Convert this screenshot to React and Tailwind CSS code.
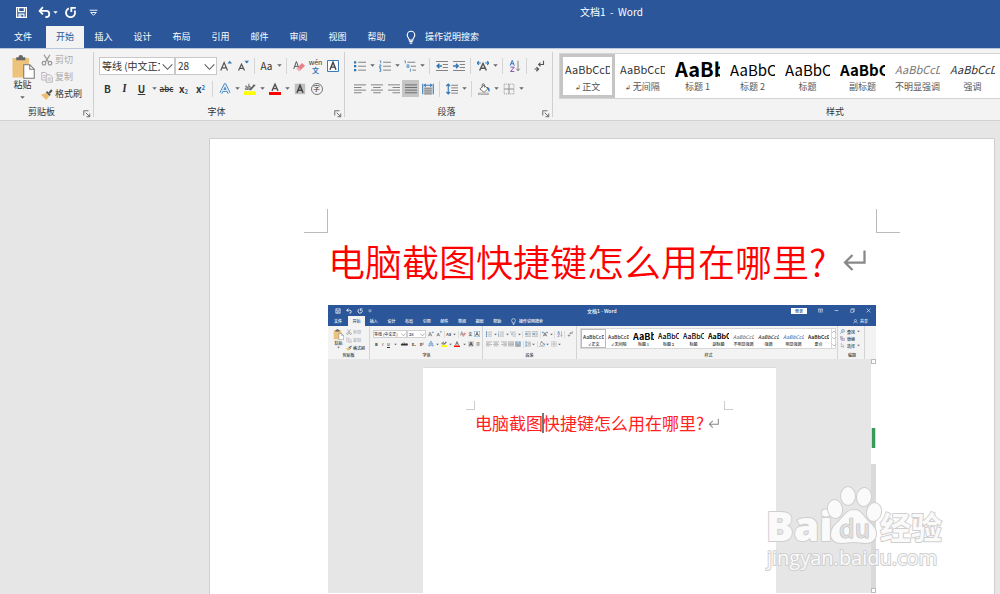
const tabs = ['插入', '设计', '布局', '引用', '邮件', '审阅', '视图', '帮助']

const styles = [
  { name: '正文', sample: 'AaBbCcDd', look: 'text-[11px]', mark: true },
  { name: '无间隔', sample: 'AaBbCcDd', look: 'text-[11px]', mark: true },
  { name: '标题 1', sample: 'AaBb', look: 'text-[20px] font-bold text-black' },
  { name: '标题 2', sample: 'AaBbC', look: 'text-[15px] text-black' },
  { name: '标题', sample: 'AaBbC', look: 'text-[15px] text-black' },
  { name: '副标题', sample: 'AaBbC', look: 'text-[15px] font-bold text-black' },
  { name: '不明显强调', sample: 'AaBbCcDd', look: 'text-[11px] italic text-[#777]' },
  { name: '强调', sample: 'AaBbCcDd', look: 'text-[11px] italic' },
]

const miniStyles = [
  { name: '↲ 正文', sample: 'AaBbCcD', look: 'text-[5px]' },
  { name: '↲ 无间隔', sample: 'AaBbCcD', look: 'text-[5px]' },
  { name: '标题 1', sample: 'AaBb', look: 'text-[9px] font-bold text-black' },
  { name: '标题 2', sample: 'AaBbC', look: 'text-[7px] text-black' },
  { name: '标题', sample: 'AaBbC', look: 'text-[7px] text-black' },
  { name: '副标题', sample: 'AaBbC', look: 'text-[7px] font-bold text-black' },
  { name: '不明显强调', sample: 'AaBbCcD', look: 'text-[5px] italic text-[#777]' },
  { name: '强调', sample: 'AaBbCcD', look: 'text-[5px] italic' },
  { name: '明显强调', sample: 'AaBbCcD', look: 'text-[5px] italic text-[#4a7ebb]' },
  { name: '要点', sample: 'AaBbCcD', look: 'text-[5px] font-bold' },
]

const gray = '#777'
const blue = '#2f75b5'

// All glyphs are drawn on a 16x16 grid
const icons = {
  save: (
    <g fill="none" stroke="#fff" strokeWidth="1.5">
      <path d="M2 2h12v12H2z" />
      <path d="M4.500 2v5h7V2M5 14v-4h6v4" />
      <path d="M7 11.500v2" />
    </g>
  ),
  undo: (
    <g fill="none" stroke="#fff" strokeWidth="2.200">
      <path d="M2 6h8a3.800 3.800 0 0 1 0 7.800H9" />
      <path d="M6 1.500L2 6l4 4.200" />
    </g>
  ),
  redo: (
    <g fill="none" stroke="#fff" strokeWidth="2.200">
      <path d="M6 3a5.600 5.600 0 1 0 7 2.500" />
      <path d="M9 7.500V2.300h5.500" />
    </g>
  ),
  customize: (
    <g fill="none" stroke="#fff" strokeWidth="1.600">
      <path d="M1 4h14M3 8h10l-5 5z" />
    </g>
  ),
  bulb: (
    <g fill="none" stroke="#fff" strokeWidth="1.300">
      <path d="M6 11.500c0-2-2.300-3-2.300-5.800a4.300 4.300 0 0 1 8.600 0c0 2.800-2.300 3.800-2.300 5.800zM6 13.200h4M6.500 15h3" />
    </g>
  ),
  scissors: (
    <g fill="none" stroke="#999" strokeWidth="1.700">
      <path d="M4 1l6 9.500M12 1L6 10.500" />
      <circle cx="4" cy="12.300" r="2.400" />
      <circle cx="12" cy="12.300" r="2.400" />
    </g>
  ),
  copy: (
    <g fill="#f3f3f3" stroke="#b5adb8" strokeWidth="1.200">
      <path d="M1 2h5l3 3v7H1z" />
      <path d="M7 5h5l3 3v7H7z" />
      <path d="M3 6h3M3 8.500h3M9 9.500h4M9 12h4" />
    </g>
  ),
  brush: (
    <g>
      <path d="M0 9l7-2.500 4 4.500-4 5z" fill="#edbd70" />
      <path d="M6.500 5.500l1.500-1.500 5 5-1.800 1.600z" fill="#555" />
      <path d="M10 5.500L13.500 1.500 15.500 3.500 12 7.500z" fill="#555" />
    </g>
  ),
  growFont: (
    <g>
      <path d="M1 14L5.500 3.500 10 14M2.700 10.500h5.600" fill="none" stroke="#555" strokeWidth="1.600" />
      <path d="M10 4.500L13 1l3 3.500z" fill={blue} />
    </g>
  ),
  shrinkFont: (
    <g>
      <path d="M2 14L6 5.500 10 14M3.700 11.200h4.600" fill="none" stroke="#555" strokeWidth="1.600" />
      <path d="M10 1h6L13 4.500z" fill={blue} />
    </g>
  ),
  eraser: (
    <g>
      <path d="M1 12L4.500 2 8 11M2.500 8.500h4" fill="none" stroke="#555" strokeWidth="1.300" />
      <path d="M4.500 11.500L12 4l4 3.500-7.500 7.500z" fill="#e5808c" />
      <path d="M4.500 11.500l2-2 4 3.500-2 2z" fill="#f2b3ba" />
    </g>
  ),
  boxedA: (
    <g fill="none">
      <path d="M.7.700h14.600v14.600H.7z" fill="#fff" stroke={blue} strokeWidth="1.300" />
      <path d="M4 13L8 3l4 10M5.500 9.500h5" stroke="#444" strokeWidth="1.900" />
    </g>
  ),
  outlineA: (
    <g fill="none" strokeLinejoin="round">
      <path d="M2.500 13.500L8 2.500l5.500 11M5 10h6" stroke={blue} strokeWidth="4" />
      <path d="M2.500 13.500L8 2.500l5.500 11M5 10h6" stroke="#dcebf7" strokeWidth="2" />
    </g>
  ),
  highlight: (
    <g>
      <path d="M0 11h16v5H0z" fill="#ff0" />
      <path d="M7 9l6-7.500L15.500 3 9 10z" fill="#666" />
      <path d="M1.500 4.500c3-1 3 0 3 4.500M4.500 6.500c-4-.5-4 3.300 0 1.800M6.500 1v8M6.500 5c3-1.500 4 3.500 0 3.500" fill="none" stroke="#444" strokeWidth="1.100" />
    </g>
  ),
  colorA: (
    <g>
      <path d="M0 12h16v4H0z" fill="#f00" />
      <path d="M4 10.500L8 1.500l4 9M5.500 7.500h5" fill="none" stroke="#555" strokeWidth="1.900" />
    </g>
  ),
  shadedA: (
    <g>
      <path d="M1 1h14v14H1z" fill="#bfbfbf" />
      <path d="M4 13L8 3l4 10M5.500 9.500h5" fill="none" stroke="#444" strokeWidth="2" />
    </g>
  ),
  bullets: (
    <g>
      <path d="M0 1.500h3v3H0zM0 6.800h3v3H0zM0 12h3v3H0z" fill={blue} />
      <path d="M5.500 3H16M5.500 8.300H16M5.500 13.500H16" stroke={gray} strokeWidth="1.200" />
    </g>
  ),
  numbers: (
    <g>
      <path d="M1 1.200h1.300v3.300M.5 6.500h2v1.700h-2v1.600h2.300M.5 11.500h2v3.700h-2M1 13.300h1.500" fill="none" stroke={blue} />
      <path d="M5.500 3H16M5.500 8.300H16M5.500 13.500H16" stroke={gray} strokeWidth="1.200" />
    </g>
  ),
  multilevel: (
    <g fill="none">
      <path d="M.5 1.200h1.300v3.300M4 6.500h2.500v3.300H4zM8.500 11.500v4" stroke={blue} />
      <path d="M4.500 3H15M9 8.300h7M11 13.500h5" stroke={gray} strokeWidth="1.200" />
    </g>
  ),
  outdent: (
    <g fill="none">
      <path d="M0 2h16M9 6h7M9 10h7M0 14h16" stroke={gray} strokeWidth="1.200" />
      <path d="M8 8H1.500M4.500 5L1.500 8l3 3" stroke={blue} strokeWidth="1.900" />
    </g>
  ),
  indent: (
    <g fill="none">
      <path d="M0 2h16M9 6h7M9 10h7M0 14h16" stroke={gray} strokeWidth="1.200" />
      <path d="M0 8h6.500M4 5l3 3-3 3" stroke={blue} strokeWidth="1.900" />
    </g>
  ),
  asian: (
    <g fill="none">
      <path d="M3.500 14L8 4.500l4.500 9.500M5.500 11h5" stroke="#555" strokeWidth="1.900" />
      <path d="M0 4h5M2.500 1.500L0 4l2.500 2.500M16 4h-5M13.500 1.500L16 4l-2.500 2.500" stroke={blue} strokeWidth="1.500" />
    </g>
  ),
  sort: (
    <g fill="none">
      <path d="M1.500 7.500l2.800-7 2.800 7M2.500 5h3.600" stroke={blue} strokeWidth="1.300" />
      <path d="M2 9.500h5L2 15.300h5" stroke="#8a4fb0" strokeWidth="1.300" />
      <path d="M12 1v13M9.500 11.500L12 14.500l2.500-3" stroke={gray} strokeWidth="1.200" />
    </g>
  ),
  marks: (
    <g fill="none" stroke="#555" strokeWidth="1.500">
      <path d="M14 1v5H8M10 3.500L7.500 6 10 8.500" />
      <path d="M2 12h5M4.500 9.500L7.500 12l-3 3" />
    </g>
  ),
  alignLeft: <path d="M0 2.500h16M0 6h10M0 9.500h16M0 13h10" stroke={gray} strokeWidth="1.200" />,
  alignCenter: <path d="M0 2.500h16M3 6h10M0 9.500h16M3 13h10" stroke={gray} strokeWidth="1.200" />,
  alignRight: <path d="M0 2.500h16M6 6h10M0 9.500h16M6 13h10" stroke={gray} strokeWidth="1.200" />,
  justify: <path d="M0 2.500h16M0 6h16M0 9.500h16M0 13h16" stroke="#666" strokeWidth="1.200" />,
  distribute: (
    <g fill="none">
      <path d="M2.500 5.500h11v10h-11z" fill="#d0d0d0" />
      <path d="M1 1v14M15 1v14M3 3h10M5 1L3 3l2 2M11 1l2 2-2 2" stroke={blue} strokeWidth="1.400" />
      <path d="M3 7h10M3 9.500h10M3 12h10M3 14.500h10" stroke={gray} strokeWidth="1.200" />
    </g>
  ),
  spacing: (
    <g fill="none">
      <path d="M3 1.500v13M.5 4L3 1.500 5.500 4M.5 12L3 14.500 5.500 12" stroke={blue} strokeWidth="1.500" />
      <path d="M7 3h9M7 6.500h9M7 10h9M7 13.500h9" stroke={gray} strokeWidth="1.200" />
    </g>
  ),
  bucket: (
    <g>
      <path d="M2.500 8L8 2.500l5 5.500-5 4.500zM5.500 6V2.500a1.500 1.500 0 0 1 3 0V6" fill="#fff" stroke="#666" strokeWidth="1.200" />
      <path d="M12 5c4 1 4 5 3 7-1.500-1-1.500-4-3-5z" fill={blue} />
      <path d="M.7 13.500h13v2H.7z" fill="#fff" stroke="#888" />
    </g>
  ),
  borders: (
    <g fill="none" stroke="#888">
      <path d="M1.500 1.500h13v13h-13z" strokeDasharray="1.500 1" />
      <path d="M8 1.500v13M1.500 8h13" strokeWidth="1.200" />
    </g>
  ),
  launcher: (
    <g fill="none" stroke="#555" strokeWidth="1.700">
      <path d="M1.500 11V1.500H11M5.500 5.500L13 13M13.500 7v6.500H7" />
    </g>
  ),
  chevron: <path d="M1 5l7 7 7-7" fill="none" stroke="#555" strokeWidth="1.500" />,
  caret: <path d="M1 4h14l-7 8z" fill="#666" />,
  caretWhite: <path d="M1 4h14l-7 8z" fill="#fff" />,
  enter: <path d="M15 1v8H2M7 4L2 9l5 5" fill="none" stroke="#888" strokeWidth="1.500" />,
  person: (
    <g fill="none" stroke="#fff" strokeWidth="1.500">
      <circle cx="8" cy="5" r="3.500" />
      <path d="M2 14c0-7 12-7 12 0" />
    </g>
  ),
  ribbonOptions: <path d="M1 3h14v10H1zM1 6h14M8 12V8M6 10l2-2 2 2" fill="none" stroke="#fff" strokeWidth="1.500" />,
  minimize: <path d="M2 8h12" stroke="#fff" strokeWidth="1.800" />,
  restore: <path d="M2 5h9v9H2zM5 5V2h9v9h-3" fill="none" stroke="#fff" strokeWidth="1.500" />,
  close: <path d="M2 2l12 12M14 2L2 14" stroke="#fff" strokeWidth="1.800" />,
  search: (
    <g fill="none" stroke={blue} strokeWidth="1.800">
      <circle cx="9.500" cy="6" r="4.500" />
      <path d="M6.500 9L1 15" />
    </g>
  ),
  replace: (
    <g fill="none" strokeWidth="1.500">
      <path d="M1 2h6v5H1z" stroke="#666" />
      <path d="M8 8h6v6H8z" stroke="#8a4fb0" />
      <path d="M3 9v4h4" stroke={blue} />
    </g>
  ),
  pointer: <path d="M4 1v12l3-3 2 5 2-1-2-4.500h4z" fill="#fff" stroke="#666" />,
  paste: (
    <g>
      <path d="M1 2h11v13H1z" fill="#edc27a" />
      <path d="M3.500 3.500h6V1.500H8a1.500 1.500 0 0 0-3 0H3.500z" fill="#666" />
      <path d="M8.500 6.500h4L15.500 9.500v6h-7z" fill="#fff" stroke="#777" strokeWidth=".7" />
      <path d="M12.500 6.500v3h3" fill="none" stroke="#777" strokeWidth=".7" />
    </g>
  ),
}

function Icon({ name, className = 'size-3' }) {
  return (
    <svg viewBox="0 0 16 16" className={`shrink-0 ${className}`} aria-hidden="true">
      {icons[name]}
    </svg>
  )
}

function Tool({ icon, label, active, children }) {
  return (
    <button
      type="button"
      aria-label={label}
      className={`flex h-[17px] w-[17px] shrink-0 items-center justify-center ${active ? 'bg-[#c5c5c5]' : ''}`}
    >
      {icon ? <Icon name={icon} /> : children}
    </button>
  )
}

function Drop({ label }) {
  return (
    <button type="button" aria-label={`${label}选项`} className="flex h-[17px] w-2 shrink-0 items-center justify-center">
      <Icon name="caret" className="size-[5px]" />
    </button>
  )
}

function Sep() {
  return (
    <div className="flex h-4 w-[7px] shrink-0 justify-center">
      <div className="w-px bg-[#d4d4d4]" />
    </div>
  )
}

function Group({ title, launcher = true, className, children }) {
  return (
    <section aria-label={title} className={`flex shrink-0 flex-col ${className}`}>
      <div className="h-[54px]">{children}</div>
      <div className="flex h-[17px] items-center pr-0.5">
        <span className="flex-1 text-center">{title}</span>
        {launcher && (
          <button type="button" aria-label={`${title}设置`} className="self-end pb-0.5">
            <Icon name="launcher" className="size-2" />
          </button>
        )}
      </div>
    </section>
  )
}

function Divider() {
  return <div className="my-[3px] w-px shrink-0 bg-[#d0d0d0]" />
}

function Combo({ label, value, className }) {
  return (
    <label className={`relative block h-[18px] shrink-0 ${className}`}>
      <span className="sr-only">{label}</span>
      <select className="block h-full w-full appearance-none overflow-hidden border border-[#c8c8c8] bg-white pr-[14px] pl-0.5 text-[10px] leading-4 text-[#333]">
        <option>{value}</option>
      </select>
      <Icon name="chevron" className="pointer-events-none absolute top-1 right-0.5 size-[11px]" />
    </label>
  )
}

function TitleBar() {
  return (
    <header className="flex h-6 items-center bg-[#2b579a] text-[10px] text-white">
      <div className="flex items-center pl-[15px]">
        <button type="button" aria-label="保存"><Icon name="save" className="size-[13px]" /></button>
        <button type="button" aria-label="撤销" className="ml-2.5"><Icon name="undo" className="size-[13px]" /></button>
        <button type="button" aria-label="撤销选项" className="ml-0.5"><Icon name="caretWhite" className="size-[5px]" /></button>
        <button type="button" aria-label="重做" className="ml-1.5"><Icon name="redo" className="size-[13px]" /></button>
        <button type="button" aria-label="自定义快速访问工具栏" className="ml-3"><Icon name="customize" className="size-[9px]" /></button>
      </div>
      <h1 className="flex-1 pr-[0px] pl-[125px] text-center whitespace-pre">文档1  -  Word</h1>
    </header>
  )
}

function TabBar() {
  return (
    <nav className="flex h-6 items-end bg-[#2b579a] text-white">
      <button type="button" className="h-[22px] w-[46px]">文件</button>
      <button type="button" className="h-[22px] w-[38px] bg-[#f3f3f3] text-[#2b579a]">开始</button>
      {tabs.map(t => (
        <button key={t} type="button" className="h-[22px] w-[39px] shrink-0">{t}</button>
      ))}
      <button type="button" className="ml-2 flex h-[22px] items-center gap-[7px]">
        <Icon name="bulb" className="size-[14px]" />
        操作说明搜索
      </button>
    </nav>
  )
}

function Ribbon() {
  return (
    <div className="flex h-[73px] overflow-hidden border-y border-t-[#b9c7de] border-b-[#d2d2d2] bg-[#f3f3f3] text-[#333]">
      <Group title="剪贴板" className="w-[93px]">
        <div className="flex pt-0.5">
          <button type="button" className="flex w-[34px] flex-col items-center pt-1 pl-[11px]">
            <Icon name="paste" className="size-6" />
            <span className="leading-3 whitespace-nowrap">粘贴</span>
            <Icon name="caret" className="mt-1 size-[5px]" />
          </button>
          <div className="ml-[7px] flex flex-col">
            <button type="button" className="flex h-[17px] items-center gap-0.5 text-[#aaa]"><Icon name="scissors" />剪切</button>
            <button type="button" className="flex h-[17px] items-center gap-0.5 text-[#aaa]"><Icon name="copy" />复制</button>
            <button type="button" className="flex h-[17px] items-center gap-0.5"><Icon name="brush" />格式刷</button>
          </div>
        </div>
      </Group>
      <Divider />
      <Group title="字体" className="w-[250px] pl-[5px]">
        <div className="flex h-[17px] items-center mt-2">
          <Combo label="字体" value="等线 (中文正文)" className="w-[76px]" />
          <Combo label="字号" value="28" className="w-[42px]" />
          <Tool icon="growFont" label="增大字号" />
          <Tool icon="shrinkFont" label="减小字号" />
          <Sep />
          <Tool label="更改大小写"><span className="text-[10px]">Aa</span></Tool>
          <Drop label="更改大小写" />
          <Sep />
          <Tool icon="eraser" label="清除所有格式" />
          <Tool label="拼音指南">
            <ruby className="text-[7px] leading-[7px]">
              <b className="text-[#2f75b5]">文</b>
              <rt className="text-[7px] leading-[7px]">wén</rt>
            </ruby>
          </Tool>
          <Tool icon="boxedA" label="字符边框" />
        </div>
        <div className="mt-1.5 flex h-[17px] items-center">
          <Tool label="加粗"><b className="text-[10px]">B</b></Tool>
          <Tool label="倾斜"><i className="font-serif text-[11px] font-bold">I</i></Tool>
          <Tool label="下划线"><u className="text-[10px] font-bold">U</u></Tool>
          <Drop label="下划线" />
          <Tool label="删除线"><s className="text-[8px] font-medium">abc</s></Tool>
          <Tool label="下标"><b className="text-[10px]">x<sub className="text-[6px] text-[#2f75b5]">2</sub></b></Tool>
          <Tool label="上标"><b className="text-[10px]">x<sup className="text-[6px] text-[#2f75b5]">2</sup></b></Tool>
          <Sep />
          <Tool icon="outlineA" label="文本效果" />
          <Drop label="文本效果" />
          <Tool icon="highlight" label="突出显示" />
          <Drop label="突出显示" />
          <Tool icon="colorA" label="字体颜色" />
          <Drop label="字体颜色" />
          <Tool icon="shadedA" label="字符底纹" />
          <Tool label="带圈字符">
            <span className="flex size-3 items-center justify-center rounded-full border border-[#777] text-[7px] leading-none">字</span>
          </Tool>
        </div>
      </Group>
      <Divider />
      <Group title="段落" className="w-[207px] pl-[6px]">
        <div className="mt-2 flex h-[17px] items-center">
          <Tool icon="bullets" label="项目符号" />
          <Drop label="项目符号" />
          <Tool icon="numbers" label="编号" />
          <Drop label="编号" />
          <Tool icon="multilevel" label="多级列表" />
          <Drop label="多级列表" />
          <Sep />
          <Tool icon="outdent" label="减少缩进量" />
          <Tool icon="indent" label="增加缩进量" />
          <Sep />
          <Tool icon="asian" label="中文版式" />
          <Drop label="中文版式" />
          <Sep />
          <Tool icon="sort" label="排序" />
          <Sep />
          <Tool icon="marks" label="显示编辑标记" />
        </div>
        <div className="mt-1.5 flex h-[17px] items-center">
          <Tool icon="alignLeft" label="左对齐" />
          <Tool icon="alignCenter" label="居中" />
          <Tool icon="alignRight" label="右对齐" />
          <Tool icon="justify" label="两端对齐" active />
          <Tool icon="distribute" label="分散对齐" />
          <Sep />
          <Tool icon="spacing" label="行和段落间距" />
          <Drop label="行和段落间距" />
          <Sep />
          <Tool icon="bucket" label="底纹" />
          <Drop label="底纹" />
          <Tool icon="borders" label="边框" />
          <Drop label="边框" />
        </div>
      </Group>
      <Divider />
      <Group title="样式" launcher={false} className="w-[560px] pl-[6px]">
        <div className="mt-1 flex h-[46px] border border-[#d4d4d4] bg-white">
          {styles.map((s, i) => (
            <button
              key={s.name}
              type="button"
              className={`flex w-[55px] shrink-0 flex-col items-center border-3 ${i === 0 ? 'border-[#c5c5c5]' : 'border-transparent'}`}
            >
              <span className={`flex h-6 w-[45px] items-center overflow-hidden leading-none whitespace-nowrap ${s.look}`}>{s.sample}</span>
              <span className="leading-3 whitespace-nowrap text-[#555]">{s.mark && <span className="text-[7px]">↲ </span>}{s.name}</span>
            </button>
          ))}
        </div>
      </Group>
    </div>
  )
}

function MiniTools({ names, className }) {
  return (
    <div className={`flex items-center justify-between ${className}`}>
      {names.map((n, i) => {
        if (n === '|') return <div key={i} className="h-[7px] w-px bg-[#dcdcdc]" />
        if (!icons[n]) return <span key={i}>{n}</span>
        return <Icon key={i} name={n} className={n === 'caret' ? 'size-[3px]' : 'size-[6px]'} />
      })}
    </div>
  )
}

function MiniGroup({ title, className, children }) {
  return (
    <div className={`flex shrink-0 flex-col border-r border-[#d4d4d4] ${className}`}>
      <div className="h-[25px]">{children}</div>
      <div className="flex h-2 items-center justify-center">{title}</div>
    </div>
  )
}

// The captured window pasted into the document
function MiniWindow() {
  return (
    <figure role="img" aria-label="Word 窗口截图" className="flex h-[288px] flex-col overflow-hidden bg-[#e6e6e6] text-[4px] leading-none font-medium text-[#333]">
      <div className="flex h-[11px] shrink-0 items-center bg-[#2b579a] text-white">
        <div className="flex w-[259px] items-center gap-[5px] pl-[7px]">
          <Icon name="save" className="size-[6px]" />
          <Icon name="undo" className="size-[6px]" />
          <Icon name="redo" className="size-[6px]" />
          <Icon name="customize" className="size-1" />
        </div>
        <span className="text-[5px]">文档1 - Word</span>
        <div className="ml-auto flex items-center gap-[11px] pr-[5px]">
          <span className="bg-white px-1 py-px text-[#2b579a]">登录</span>
          <Icon name="ribbonOptions" className="size-[5px]" />
          <Icon name="minimize" className="size-[5px]" />
          <Icon name="restore" className="size-[5px]" />
          <Icon name="close" className="size-[5px]" />
        </div>
      </div>
      <div className="flex h-[10px] shrink-0 items-center bg-[#2b579a] text-white">
        <span className="w-5 text-center">文件</span>
        <span className="flex h-full w-[17px] items-center justify-center bg-[#f3f3f3] text-[#2b579a]">开始</span>
        <div className="flex w-[141px]">
          {tabs.map(t => <span key={t} className="flex-1 text-center">{t}</span>)}
        </div>
        <Icon name="bulb" className="ml-1 size-[7px]" />
        <span className="ml-0.5">操作说明搜索</span>
        <span className="ml-auto flex items-center gap-0.5 pr-2"><Icon name="person" className="size-[5px]" />共享</span>
      </div>
      <div className="flex h-[33px] shrink-0 bg-[#f3f3f3]">
        <MiniGroup title="剪贴板" className="w-[42px]">
          <div className="flex gap-0.5 pt-[3px] pl-[5px]">
            <div className="flex flex-col items-center gap-px">
              <Icon name="paste" className="size-[11px]" />
              粘贴
              <Icon name="caret" className="size-[3px]" />
            </div>
            <div className="flex flex-col gap-0.5 text-[#aaa]">
              <span className="flex items-center gap-px"><Icon name="scissors" className="size-[6px]" />剪切</span>
              <span className="flex items-center gap-px"><Icon name="copy" className="size-[6px]" />复制</span>
              <span className="flex items-center gap-px text-[#333]"><Icon name="brush" className="size-[6px]" />格式刷</span>
            </div>
          </div>
        </MiniGroup>
        <MiniGroup title="字体" className="w-[113px] pr-0.5 pl-[3px]">
          <div className="flex items-center pt-1">
            <span className="flex h-2 w-[34px] items-center justify-between border border-[#d0d0d0] bg-white">等线 (中文正)<Icon name="chevron" className="size-[5px]" /></span>
            <span className="flex h-2 w-[19px] items-center justify-between border border-[#d0d0d0] bg-white pl-px">28<Icon name="chevron" className="size-[5px]" /></span>
            <MiniTools className="ml-0.5 flex-1" names={['growFont', 'shrinkFont', '|', 'Aa', 'caret', '|', 'eraser', '文', 'boxedA']} />
          </div>
          <div className="mt-[3px] flex items-center gap-1 pl-0.5">
            <b>B</b><i>I</i><u>U</u><Icon name="caret" className="size-[3px]" /><s>abc</s><b>x₂</b><b>x²</b>
            <MiniTools className="flex-1" names={['outlineA', 'caret', 'highlight', 'caret', 'colorA', 'caret', 'shadedA', '㊫']} />
          </div>
        </MiniGroup>
        <MiniGroup title="段落" className="w-[94px] pr-[3px] pl-[3px]">
          <MiniTools className="mt-1 h-2" names={['bullets', 'caret', 'numbers', 'caret', 'multilevel', 'caret', '|', 'outdent', 'indent', '|', 'asian', 'caret', '|', 'sort', '|', 'marks']} />
          <MiniTools className="mt-0.5 h-2 pr-3" names={['alignLeft', 'alignCenter', 'alignRight', 'justify', 'distribute', '|', 'spacing', 'caret', '|', 'bucket', 'caret', 'borders', 'caret']} />
        </MiniGroup>
        <MiniGroup title="样式" className="w-[261px] pl-[3px]">
          <div className="mt-0.5 flex h-[21px] w-[256px] border border-[#d8d8d8] bg-white">
            {miniStyles.map((s, i) => (
              <div key={s.name} className={`flex w-[25px] shrink-0 flex-col items-center border ${i === 0 ? 'border-[#bbb]' : 'border-transparent'}`}>
                <span className={`flex h-3 w-[21px] items-center overflow-hidden leading-none whitespace-nowrap ${s.look}`}>{s.sample}</span>
                <span className="whitespace-nowrap">{s.name}</span>
              </div>
            ))}
            <div className="flex flex-col justify-around border-l border-[#d8d8d8]">
              <Icon name="chevron" className="size-1 rotate-180" />
              <Icon name="chevron" className="size-1" />
              <Icon name="chevron" className="size-1" />
            </div>
          </div>
        </MiniGroup>
        <MiniGroup title="编辑" className="w-[27px] pl-0.5">
          <div className="flex flex-col gap-0.5 pt-[3px]">
            <span className="flex items-center gap-0.5"><Icon name="search" className="size-[5px]" />查找<Icon name="caret" className="size-[3px]" /></span>
            <span className="flex items-center gap-0.5"><Icon name="replace" className="size-[5px]" />替换</span>
            <span className="flex items-center gap-0.5"><Icon name="pointer" className="size-[5px]" />选择<Icon name="caret" className="size-[3px]" /></span>
          </div>
        </MiniGroup>
      </div>
      <div className="flex flex-1">
        <div className="flex-1 px-[95px] pt-2">
          <div className="h-full border-t border-[#ddd] bg-white px-[43px] pt-[33px]">
            <div className="flex justify-between">
              <div className="size-[9px] border-r border-b border-[#ccc]" />
              <div className="size-[9px] border-b border-l border-[#ccc]" />
            </div>
            <div className="mt-[3px] flex items-center pl-[9px] text-[17px] leading-5 font-normal whitespace-nowrap text-[#f22]">
              电脑截图<span className="-mx-px h-5 w-0.5 shrink-0 bg-[#777]" />快捷键怎么用在哪里?
              <Icon name="enter" className="ml-1 size-[11px]" />
            </div>
          </div>
        </div>
        <div className="flex w-[5px] flex-col items-center bg-[#dadada]">
          <span className="size-[5px] shrink-0 border border-[#bbb] bg-white" />
          <span className="h-16 w-full shrink-0 bg-white" />
          <span className="h-5 w-[3px] shrink-0 bg-[#3a9a5c]" />
          <span className="h-4 w-full shrink-0 bg-white" />
          <span className="mt-auto size-[5px] shrink-0 border border-[#bbb] bg-white" />
        </div>
      </div>
    </figure>
  )
}

function Watermark() {
  return (
    <svg viewBox="0 0 184 92" className="absolute right-[51px] bottom-[18px] h-[92px] w-[184px]" role="img" aria-label="Baidu 经验">
      <g fill="#fafafa" stroke="#cfcfcf" strokeWidth="2" strokeLinejoin="round" paintOrder="stroke" fontFamily="Noto Sans CJK SC, sans-serif">
        <text x="1" y="57" fontSize="41" fontWeight="800" fontFamily="Open Sans, sans-serif">Bai</text>
        <path d="M89 26c8 0 10 8 16 13 10 8 7 20-4 20-5 0-7-1-12-1s-8 1-12 1c-13 0-14-12-5-20 6-5 9-13 17-13z" />
        <ellipse cx="70" cy="25" rx="7" ry="9" transform="rotate(-10 70 25)" />
        <ellipse cx="83" cy="12" rx="7" ry="9" />
        <ellipse cx="99" cy="13" rx="7" ry="9" transform="rotate(8 99 13)" />
        <ellipse cx="109" cy="28" rx="7" ry="9" transform="rotate(12 109 28)" />
        <text x="74" y="54" fontSize="25" fontWeight="500" fill="#dedede" stroke="#bbb" strokeWidth="1">du</text>
        <text x="115" y="55" fontSize="31" fontWeight="700">经验</text>
        <text x="2" y="81" fontSize="20" fontFamily="Open Sans, sans-serif">jingyan.baidu.com</text>
      </g>
    </svg>
  )
}

export default function App() {
  return (
    <div className="relative flex h-screen flex-col overflow-hidden bg-[#e6e6e6] font-['Noto_Sans_CJK_SC',sans-serif] text-[9px] leading-3">
      <TitleBar />
      <TabBar />
      <Ribbon />
      <main className="flex-1 overflow-hidden pt-[17px] pr-[5px] pl-[209px]">
        <article className="h-full border border-b-0 border-[#d0d0d0] bg-white px-[94px] pt-[70px]">
          <div className="flex justify-between">
            <div className="size-6 border-r border-b border-[#bbb]" />
            <div className="size-6 border-b border-l border-[#bbb]" />
          </div>
          <div className="px-6">
            <h2 className="flex h-[72px] items-center pb-4 text-[37px] leading-none font-[350] whitespace-nowrap text-[#f00]">
              电脑截图快捷键怎么用在哪里?
              <Icon name="enter" className="ml-4 size-6" />
            </h2>
            <MiniWindow />
          </div>
        </article>
      </main>
      <Watermark />
    </div>
  )
}
